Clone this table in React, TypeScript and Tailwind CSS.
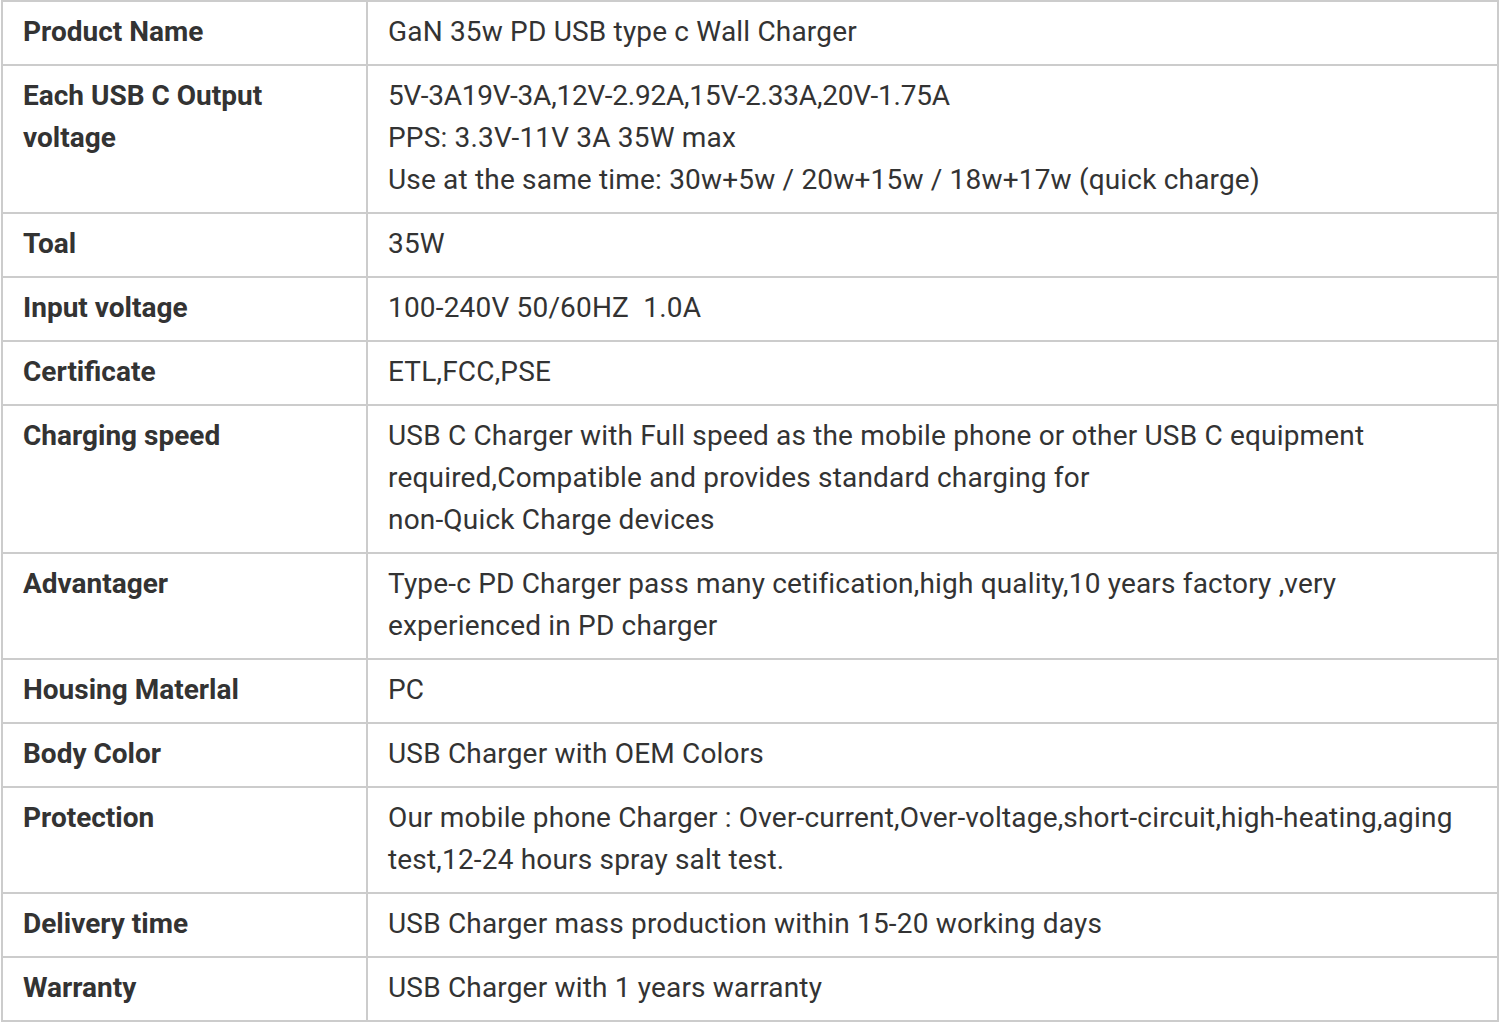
const rows: { label: string; value: React.ReactNode }[] = [
  { label: "Product Name", value: "GaN 35w PD USB type c Wall Charger" },
  {
    label: "Each USB C Output voltage",
    value: (
      <>
        <span className="tracking-[-0.2px]">5V-3A19V-3A,12V-2.92A,15V-2.33A,20V-1.75A</span>
        <br />
        PPS: 3.3V-11V 3A 35W max
        <br />
        Use at the same time: 30w+5w / 20w+15w / 18w+17w (quick charge)
      </>
    ),
  },
  { label: "Toal", value: "35W" },
  { label: "Input voltage", value: "100-240V 50/60HZ\u00a0 1.0A" },
  { label: "Certificate", value: "ETL,FCC,PSE" },
  {
    label: "Charging speed",
    value: (
      <>
        USB C Charger with Full speed as the mobile phone or other USB C equipment
        <br />
        required,Compatible and provides standard charging for
        <br />
        non-Quick Charge devices
      </>
    ),
  },
  {
    label: "Advantager",
    value: "Type-c PD Charger pass many cetification,high quality,10 years factory ,very experienced in PD charger",
  },
  { label: "Housing Materlal", value: "PC" },
  { label: "Body Color", value: "USB Charger with OEM Colors" },
  {
    label: "Protection",
    value:
      "Our mobile phone Charger : Over-current,Over-voltage,short-circuit,high-heating,aging test,12-24 hours spray salt test.",
  },
  { label: "Delivery time", value: "USB Charger mass production within 15-20 working days" },
  { label: "Warranty", value: "USB Charger with 1 years warranty" },
];

export default function App() {
  return (
    <div className="bg-white min-h-screen pl-px font-['Roboto',sans-serif] text-[#333333]">
      <table className="w-[1498px] table-fixed border-separate border-spacing-0 border-l-2 border-t-2 border-[#cccccc]">
        <tbody>
          {rows.map((row) => (
            <tr key={row.label}>
              <td className="w-[365px] align-top border-r-2 border-b-2 border-[#cccccc] px-5 pt-[9px] pb-[11px] text-[28px] leading-[42px] font-bold">
                {row.label}
              </td>
              <td className="align-top border-r-2 border-b-2 border-[#cccccc] px-5 pt-[9px] pb-[11px] text-[28px] leading-[42px] font-normal tracking-[0.18px]">
                {row.value}
              </td>
            </tr>
          ))}
        </tbody>
      </table>
    </div>
  );
}
